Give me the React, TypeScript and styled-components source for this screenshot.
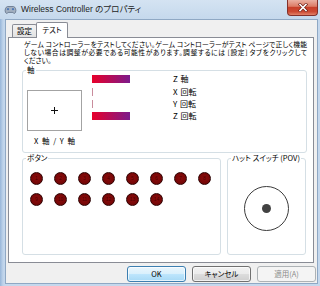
import React from "react";
import styled, { createGlobalStyle } from "styled-components";

const GlobalStyle = createGlobalStyle`
  html, body {
    margin: 0;
    padding: 0;
    background: #fff;
  }
  body {
    font-family: "Noto Sans CJK JP", "Liberation Sans", sans-serif;
    font-feature-settings: "palt";
    color: #000;
  }
`;

const Window = styled.div`
  width: 320px;
  height: 286px;
  display: flex;
  flex-direction: column;
  background: linear-gradient(to bottom, #d4e3f2, #bcd2e9 30px, #b3cbe5);
  overflow: hidden;
`;

const TitleBar = styled.div`
  height: 19px;
  display: flex;
  align-items: flex-start;
  padding-left: 4px;
  flex-shrink: 0;
`;

const TitleIcon = styled.svg`
  margin-top: 5px;
  flex-shrink: 0;
`;

const TitleText = styled.div`
  margin-left: 4px;
  margin-top: 3px;
  font-family: "Liberation Sans", "Noto Sans CJK JP", sans-serif;
  font-size: 8.5px;
  line-height: 12px;
  color: #1e1e1e;
  white-space: nowrap;
`;

const CloseButton = styled.div`
  margin-left: auto;
  margin-right: 2px;
  width: 31px;
  height: 16px;
  box-sizing: border-box;
  border: 1px solid #83302a;
  border-top: none;
  border-radius: 0 0 4px 4px;
  background: linear-gradient(
    to bottom,
    #eab0a2,
    #dc7c66 42%,
    #c8402a 50%,
    #cc4a33 78%,
    #e2836a
  );
  display: grid;
  place-items: center;
`;

const Body = styled.div`
  flex: 1;
  display: flex;
  padding: 0 4px 2px 5px;
  background: linear-gradient(to right, #97b6d9, #bed3ea 3px, #c5d8ed 5px);
`;

const Client = styled.div`
  flex: 1;
  display: flex;
  flex-direction: column;
  background: #f0f0f0;
  border: 1px solid #8fa8c4;
  padding: 0 3px 1px 2px;
`;

const TabStrip = styled.div`
  height: 17px;
  display: flex;
  align-items: flex-end;
  padding-left: 4px;
`;

const Tab = styled.div<{ $active?: boolean }>`
  position: relative;
  z-index: ${(p) => (p.$active ? 1 : 0)};
  box-sizing: border-box;
  width: ${(p) => (p.$active ? "32px" : "25px")};
  height: ${(p) => (p.$active ? "16px" : "13px")};
  margin-bottom: ${(p) => (p.$active ? "-1px" : "0")};
  margin-left: ${(p) => (p.$active ? "-1px" : "0")};
  border: 1px solid #898c95;
  border-bottom: none;
  border-radius: 2px 2px 0 0;
  background: ${(p) =>
    p.$active ? "#fff" : "linear-gradient(to bottom, #f3f3f3, #e2e2e2)"};
  font-size: 7.5px;
  line-height: ${(p) => (p.$active ? "13px" : "12px")};
  text-align: center;
  white-space: nowrap;
`;

const Panel = styled.div`
  height: 226px;
  box-sizing: border-box;
  background: #fff;
  border: 1px solid #898c95;
  padding: 2px 6px 0 13px;
  display: flex;
  flex-direction: column;
`;

const Description = styled.div`
  margin-left: 2px;
  width: 283px;
  font-size: 6.8px;
  line-height: 8px;
`;

const DescLine = styled.div<{ $full?: boolean }>`
  text-align: ${(p) => (p.$full ? "justify" : "left")};
  text-align-last: ${(p) => (p.$full ? "justify" : "left")};
`;

const Group = styled.div<{ $height: number; $width?: number }>`
  position: relative;
  box-sizing: border-box;
  height: ${(p) => p.$height}px;
  ${(p) => (p.$width ? `width: ${p.$width}px; flex-shrink: 0;` : "")}
  border: 1px solid #d5dfe5;
  border-radius: 3px;
`;

const Legend = styled.span`
  position: absolute;
  top: -6px;
  left: 3px;
  padding: 0 1px;
  background: #fff;
  font-size: 7.5px;
  line-height: 10px;
  white-space: nowrap;
`;

const AxisGroup = styled(Group)`
  margin-top: 6px;
  display: flex;
  padding: 2px 0 0 4px;
`;

const XYColumn = styled.div`
  margin-top: 17px;
  width: 55px;
  display: flex;
  flex-direction: column;
  align-items: center;
`;

const XYBox = styled.div`
  width: 55px;
  height: 41px;
  box-sizing: border-box;
  border: 1px solid #a3a3a3;
  display: grid;
  place-items: center;
`;

const XYLabel = styled.div`
  margin-top: 5px;
  font-size: 7.5px;
  line-height: 9px;
  word-spacing: 2px;
  white-space: nowrap;
`;

const SliderGrid = styled.div`
  margin-left: 10px;
  display: grid;
  grid-template-columns: 81px auto;
  grid-auto-rows: 12.4px;
  align-items: center;
`;

const Track = styled.div`
  height: 8px;
  display: flex;
`;

const Fill = styled.div<{ $thin?: boolean }>`
  height: 100%;
  background: ${(p) =>
    p.$thin ? "#c98c9c" : "linear-gradient(to right, #e8002a, #7c1b8c)"};
`;

const AxisName = styled.div`
  font-size: 8px;
  line-height: 10px;
  word-spacing: 1px;
  white-space: nowrap;
`;

const BottomRow = styled.div`
  margin-top: 5px;
  display: flex;
  gap: 6px;
`;

const ButtonGrid = styled.div`
  display: grid;
  grid-template-columns: repeat(8, 13px);
  grid-auto-rows: 13px;
  column-gap: 11px;
  row-gap: 8px;
  padding: 13px 0 0 7px;
`;

const JoyButton = styled.div`
  width: 13px;
  height: 13px;
  box-sizing: border-box;
  border-radius: 50%;
  border: 1px solid #2e0202;
  background: radial-gradient(circle at 50% 45%, #8c0c0c, #6a0404);
  display: grid;
  place-items: center;
  font-family: "Liberation Sans", sans-serif;
  font-size: 5px;
  line-height: 5px;
  color: #4e0000;
`;

const PovGroup = styled(Group)`
  display: grid;
  place-items: center;
  padding-top: 4px;
`;

const PovRing = styled.div`
  width: 45px;
  height: 45px;
  box-sizing: border-box;
  border-radius: 50%;
  border: 1px solid #3c3c3c;
  display: grid;
  place-items: center;
`;

const PovDot = styled.div`
  width: 9px;
  height: 9px;
  border-radius: 50%;
  background: #424242;
`;

const ButtonBar = styled.div`
  margin-top: 3px;
  margin-right: -2px;
  display: flex;
  justify-content: flex-end;
  gap: 6px;
`;

const DialogButton = styled.div<{ $default?: boolean; $disabled?: boolean }>`
  width: 59px;
  height: 16px;
  box-sizing: border-box;
  border-radius: 3px;
  border: 1px solid
    ${(p) => (p.$default ? "#3c7fb1" : p.$disabled ? "#adb2b5" : "#707070")};
  background: ${(p) =>
    p.$disabled
      ? "#f4f4f4"
      : p.$default
        ? "linear-gradient(to bottom, #eaf6fd, #d9f0fc 50%, #bee6fd 50%, #a7d9f5)"
        : "linear-gradient(to bottom, #f2f2f2, #ebebeb 50%, #dddddd 50%, #cfcfcf)"};
  box-shadow: inset 0 0 0 1px
    ${(p) => (p.$disabled ? "transparent" : "rgba(255,255,255,0.7)")};
  color: ${(p) => (p.$disabled ? "#8a8a8a" : "#000")};
  font-size: 7.5px;
  line-height: 14px;
  text-align: center;
  white-space: nowrap;
`;

const axes = [
  { name: "Z 軸", value: 38 },
  { name: "X 回転", value: 1 },
  { name: "Y 回転", value: 1 },
  { name: "Z 回転", value: 38 },
];

const buttons = Array.from({ length: 14 }, (_, i) => i + 1);

function ControllerIcon() {
  return (
    <TitleIcon width="13" height="10" viewBox="0 0 13 10">
      <path
        d="M1.5 7.5 C0.5 5 1.5 2 3.5 1.5 L9.5 1.5 C11.5 2 12.5 5 11.5 7.5 C10.8 8.8 9.5 8.6 8.8 7.4 L4.2 7.4 C3.5 8.6 2.2 8.8 1.5 7.5 Z"
        fill="#a3b0c0"
        stroke="#5f7088"
        strokeWidth="0.8"
      />
      <circle cx="4" cy="4.2" r="1.1" fill="#4d79b8" />
      <circle cx="9" cy="4.2" r="1.1" fill="#4d79b8" />
    </TitleIcon>
  );
}

function CloseGlyph() {
  return (
    <svg width="10" height="9" viewBox="0 0 10 9">
      <path d="M2 1.5 L8 7.5 M8 1.5 L2 7.5" stroke="#6a1a12" strokeWidth="3" strokeLinecap="square" />
      <path d="M2 1.5 L8 7.5 M8 1.5 L2 7.5" stroke="#fff" strokeWidth="1.6" strokeLinecap="square" />
    </svg>
  );
}

function Crosshair() {
  return (
    <svg width="7" height="7" viewBox="0 0 7 7">
      <path d="M3.5 0 V7 M0 3.5 H7" stroke="#111" strokeWidth="1" />
    </svg>
  );
}

export default function App() {
  return (
    <>
      <GlobalStyle />
      <Window>
        <TitleBar>
          <ControllerIcon />
          <TitleText>Wireless Controller のプロパティ</TitleText>
          <CloseButton>
            <CloseGlyph />
          </CloseButton>
        </TitleBar>
        <Body>
          <Client>
            <TabStrip>
              <Tab>設定</Tab>
              <Tab $active>テスト</Tab>
            </TabStrip>
            <Panel>
              <Description>
                <DescLine $full>
                  ゲーム コントローラーをテストしてください。ゲーム コントローラーがテスト ページで正しく機能
                </DescLine>
                <DescLine $full>
                  しない場合は調整が必要である可能性があります。調整するには [設定] タブをクリックして
                </DescLine>
                <DescLine>ください。</DescLine>
              </Description>

              <AxisGroup $height={83}>
                <Legend>軸</Legend>
                <XYColumn>
                  <XYBox>
                    <Crosshair />
                  </XYBox>
                  <XYLabel>X 軸 / Y 軸</XYLabel>
                </XYColumn>
                <SliderGrid>
                  {axes.map((a) => (
                    <React.Fragment key={a.name}>
                      <Track>
                        <Fill $thin={a.value < 3} style={{ width: a.value }} />
                      </Track>
                      <AxisName>{a.name}</AxisName>
                    </React.Fragment>
                  ))}
                </SliderGrid>
              </AxisGroup>

              <BottomRow>
                <Group $height={97} $width={199}>
                  <Legend>ボタン</Legend>
                  <ButtonGrid>
                    {buttons.map((n) => (
                      <JoyButton key={n}>{n}</JoyButton>
                    ))}
                  </ButtonGrid>
                </Group>
                <PovGroup $height={97} $width={79}>
                  <Legend>ハット スイッチ (POV)</Legend>
                  <PovRing>
                    <PovDot />
                  </PovRing>
                </PovGroup>
              </BottomRow>
            </Panel>
            <ButtonBar>
              <DialogButton $default>OK</DialogButton>
              <DialogButton>キャンセル</DialogButton>
              <DialogButton $disabled>適用(A)</DialogButton>
            </ButtonBar>
          </Client>
        </Body>
      </Window>
    </>
  );
}
